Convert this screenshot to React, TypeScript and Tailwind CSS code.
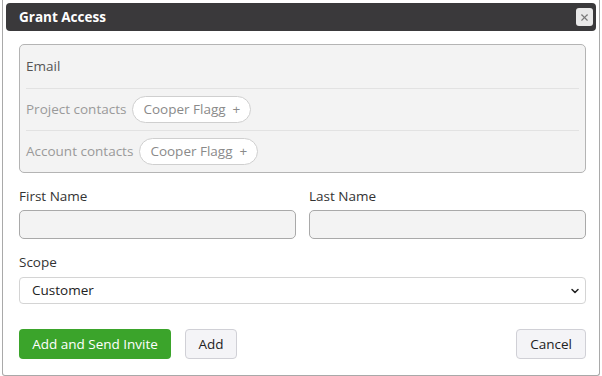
import { ChevronDown, X } from "lucide-react";

function Pill({ name }: { name: string }) {
  return (
    <span className="inline-flex items-center h-[27px] px-[10px] rounded-full border border-[#cfcfcf] bg-white text-[#8a8a8a] text-[13.5px]">
      {name}
      <span className="ml-[7px]">+</span>
    </span>
  );
}

export default function App() {
  const font = { fontFamily: '"Open Sans", "Liberation Sans", sans-serif' };

  return (
    <div className="w-[602px] h-[376px] bg-white overflow-hidden" style={font}>
      <div className="ml-[2px] w-[598px] h-[376px] border-x border-b border-[#a9a9a9] rounded-b-[3px] flex flex-col">
        {/* header */}
        <div className="mt-[3px] mx-[3px] h-[28px] rounded-[4px] bg-[#3a393b] flex items-center pl-[13px] pr-[3px]">
          <span className="text-white text-[13.5px] font-bold">Grant Access</span>
          <button className="ml-auto w-[17px] h-[18px] rounded-[3px] bg-[#e9e9e9] flex items-center justify-center">
            <X className="w-[11px] h-[11px] text-[#7a7a7a]" strokeWidth={2.5} />
          </button>
        </div>

        <div className="pl-[16px] pr-[13px] flex flex-col">
          {/* contacts box */}
          <div className="mt-[13px] h-[129px] rounded-[5px] border border-[#b4b4b4] bg-[#f3f3f3] px-[6px] flex flex-col">
            <div className="h-[44px] border-b border-[#e2e2e2] flex items-center text-[13.5px] text-[#555]">
              Email
            </div>
            <div className="h-[42px] border-b border-[#e2e2e2] flex items-center gap-[6px] text-[13.5px] text-[#9a9a9a]">
              Project contacts
              <Pill name="Cooper Flagg" />
            </div>
            <div className="h-[41px] flex items-center gap-[6px] text-[13.5px] text-[#9a9a9a]">
              Account contacts
              <Pill name="Cooper Flagg" />
            </div>
          </div>

          {/* names */}
          <div className="mt-[15px] grid grid-cols-2 gap-x-[13px]">
            <div className="flex flex-col">
              <label className="text-[13.5px] leading-[16px] text-[#333]">First Name</label>
              <div className="mt-[6px] h-[29px] rounded-[5px] border border-[#a9a9a9] bg-[#f3f3f3]" />
            </div>
            <div className="flex flex-col">
              <label className="text-[13.5px] leading-[16px] text-[#333]">Last Name</label>
              <div className="mt-[6px] h-[29px] rounded-[5px] border border-[#a9a9a9] bg-[#f3f3f3]" />
            </div>
          </div>

          {/* scope */}
          <label className="mt-[15px] text-[13.5px] leading-[16px] text-[#333]">Scope</label>
          <div className="mt-[7px] h-[27px] rounded-[4px] border border-[#d4d4d4] bg-white flex items-center pl-[12px] pr-[4px] text-[13.5px] text-[#222]">
            Customer
            <ChevronDown className="ml-auto w-[12px] h-[12px] text-[#222]" strokeWidth={3} />
          </div>

          {/* actions */}
          <div className="mt-[25px] flex items-center">
            <button className="h-[30px] w-[152px] rounded-[4px] bg-[#3ba42b] text-white text-[13.5px]">
              Add and Send Invite
            </button>
            <button className="ml-[14px] h-[30px] w-[52px] rounded-[4px] border border-[#d0d0d6] bg-[#f4f4f7] text-[#222] text-[13.5px]">
              Add
            </button>
            <button className="ml-auto h-[30px] w-[70px] rounded-[4px] border border-[#d0d0d6] bg-[#f4f4f7] text-[#222] text-[13.5px]">
              Cancel
            </button>
          </div>
        </div>
      </div>
    </div>
  );
}
